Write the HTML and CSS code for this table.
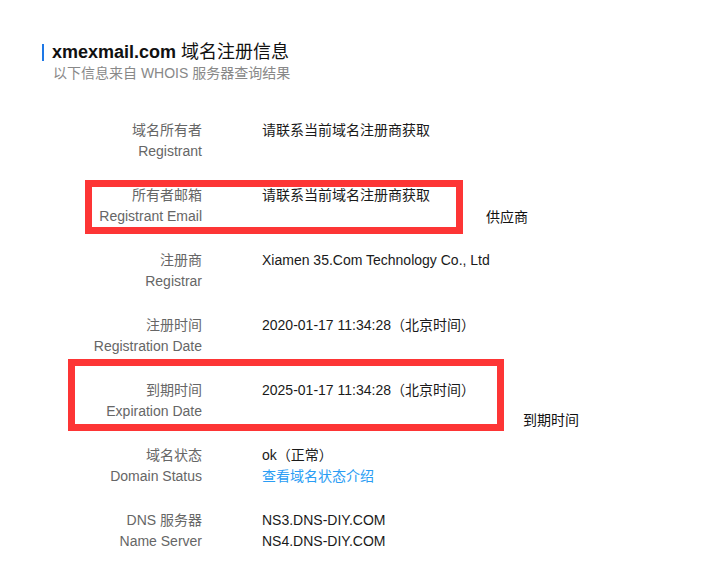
FILE: index.html
```html
<!DOCTYPE html>
<html lang="zh-CN">
<head>
<meta charset="utf-8">
<title>xmexmail.com 域名注册信息</title>
<link rel="stylesheet" href="styles.css">
</head>
<body>
<div class="page">
  <header class="head">
    <h1 class="title"><b>xmexmail.com</b> 域名注册信息</h1>
    <p class="sub">以下信息来自 WHOIS 服务器查询结果</p>
  </header>
  <div class="rows">
    <div class="row"><div class="lbl"><div>域名所有者</div><div>Registrant</div></div><div class="val"><div>请联系当前域名注册商获取</div></div></div>
    <div class="row"><div class="lbl"><div>所有者邮箱</div><div>Registrant Email</div></div><div class="val"><div>请联系当前域名注册商获取</div></div></div>
    <div class="row"><div class="lbl"><div>注册商</div><div>Registrar</div></div><div class="val"><div>Xiamen 35.Com Technology Co., Ltd</div></div></div>
    <div class="row"><div class="lbl"><div>注册时间</div><div>Registration Date</div></div><div class="val"><div>2020-01-17 11:34:28（北京时间）</div></div></div>
    <div class="row"><div class="lbl"><div>到期时间</div><div>Expiration Date</div></div><div class="val"><div>2025-01-17 11:34:28（北京时间）</div></div></div>
    <div class="row"><div class="lbl"><div>域名状态</div><div>Domain Status</div></div><div class="val"><div>ok（正常）</div><a class="link" href="#">查看域名状态介绍</a></div></div>
    <div class="row"><div class="lbl"><div>DNS 服务器</div><div>Name Server</div></div><div class="val"><div>NS3.DNS-DIY.COM</div><div>NS4.DNS-DIY.COM</div></div></div>
  </div>
  <div class="mark mark-email"></div>
  <div class="mark mark-exp"></div>
  <div class="note note-email">供应商</div>
  <div class="note note-exp">到期时间</div>
</div>
</body>
</html>
```

FILE: styles.css
```css
html, body {
  margin: 0;
  padding: 0;
  background: #fff;
}
body {
  font-family: "Liberation Sans", Arial, "Noto Sans CJK SC", sans-serif;
  color: #222;
}
.page {
  position: relative;
  width: 720px;
  height: 574px;
  padding: 44px 0 0 42px;
  box-sizing: border-box;
}
.head {
  margin: 0;
}
.title {
  margin: 0;
  font-size: 18px;
  font-weight: normal;
  line-height: 17px;
  color: #111;
  border-left: 2px solid #1e78e6;
  padding-left: 8px;
}
.title b {
  font-weight: bold;
}
.sub {
  margin: 3px 0 0 11px;
  font-size: 14px;
  line-height: 18px;
  color: #888;
}
.rows {
  margin-top: 38px;
  display: flex;
  flex-direction: column;
  gap: 23px;
}
.row {
  display: grid;
  grid-template-columns: 160px auto;
  column-gap: 60px;
  font-size: 14px;
  line-height: 21px;
}
.lbl {
  text-align: right;
  color: #666;
}
.val {
  color: #1a1a1a;
}
.link {
  color: #2a9df4;
  text-decoration: none;
  display: block;
}
.mark {
  position: absolute;
  border: 7px solid #fd3535;
  box-sizing: border-box;
}
.mark-email {
  left: 85px;
  top: 180px;
  width: 378px;
  height: 54px;
}
.mark-exp {
  left: 68px;
  top: 359px;
  width: 436px;
  height: 72px;
}
.note {
  position: absolute;
  font-size: 14px;
  line-height: 20px;
  color: #111;
}
.note-email {
  left: 486px;
  top: 207px;
}
.note-exp {
  left: 523px;
  top: 410px;
}
```
